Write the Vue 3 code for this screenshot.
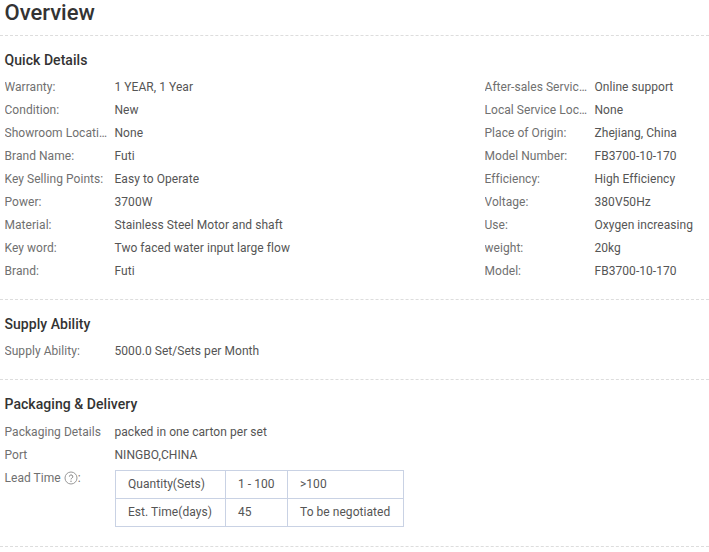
<script setup>
const left = [
  ['Warranty:', '1 YEAR, 1 Year'], ['Condition:', 'New'], ['Showroom Location:', 'None'],
  ['Brand Name:', 'Futi'], ['Key Selling Points:', 'Easy to Operate'], ['Power:', '3700W'],
  ['Material:', 'Stainless Steel Motor and shaft'], ['Key word:', 'Two faced water input large flow'], ['Brand:', 'Futi'],
]
const right = [
  ['After-sales Service Provided:', 'Online support'], ['Local Service Location:', 'None'], ['Place of Origin:', 'Zhejiang, China'],
  ['Model Number:', 'FB3700-10-170'], ['Efficiency:', 'High Efficiency'], ['Voltage:', '380V50Hz'],
  ['Use:', 'Oxygen increasing'], ['weight:', '20kg'], ['Model:', 'FB3700-10-170'],
]
</script>

<template>
  <div class="page">
    <h2 class="title">Overview</h2>

    <section class="quick">
      <h3>Quick Details</h3>
      <div class="cols">
        <div class="col left">
          <div v-for="r in left" :key="r[0]" class="row">
            <span class="label">{{ r[0] }}</span><span class="value">{{ r[1] }}</span>
          </div>
        </div>
        <div class="col">
          <div v-for="r in right" :key="r[0]" class="row">
            <span class="label">{{ r[0] }}</span><span class="value">{{ r[1] }}</span>
          </div>
        </div>
      </div>
    </section>

    <section class="supply">
      <h3>Supply Ability</h3>
      <div class="row">
        <span class="label">Supply Ability:</span><span class="value">5000.0 Set/Sets per Month</span>
      </div>
    </section>

    <section class="packaging">
      <h3>Packaging &amp; Delivery</h3>
      <div class="row">
        <span class="label">Packaging Details</span><span class="value">packed in one carton per set</span>
      </div>
      <div class="row">
        <span class="label">Port</span><span class="value">NINGBO,CHINA</span>
      </div>
      <div class="lead">
        <span class="label lead-label">Lead Time
          <svg class="help" width="14" height="14" viewBox="0 0 14 14">
            <circle cx="7" cy="7" r="6" fill="none" stroke="#999" stroke-width="1" />
            <path d="M5.4 5.6a1.7 1.7 0 1 1 2.5 1.5c-.6.3-.9.6-.9 1.3" fill="none" stroke="#888" stroke-width="1" />
            <circle cx="7" cy="10.3" r=".7" fill="#888" />
          </svg>:</span>
        <table>
          <tbody>
            <tr><td class="c1">Quantity(Sets)</td><td class="c2">1 - 100</td><td class="c3">&gt;100</td></tr>
            <tr><td class="c1">Est. Time(days)</td><td class="c2">45</td><td class="c3">To be negotiated</td></tr>
          </tbody>
        </table>
      </div>
    </section>
  </div>
</template>

<style scoped>
.page {
  width: 709px;
  height: 552px;
  overflow: hidden;
  box-sizing: border-box;
  font-family: Roboto, "Liberation Sans", sans-serif;
  font-size: 12px;
  letter-spacing: 0.05px;
  color: #555;
}
.title {
  margin: 0;
  height: 36px;
  box-sizing: border-box;
  padding-left: 4.5px;
  font-size: 22px;
  font-weight: 500;
  line-height: 25px;
  letter-spacing: 0;
  color: #333;
  border-bottom: 1px dashed #ddd;
}
section {
  box-sizing: border-box;
  padding-left: 4.5px;
  border-bottom: 1px dashed #ddd;
}
.quick { height: 264px; padding-top: 14px; }
.supply { height: 80px; padding-top: 14px; }
.packaging { height: 167px; padding-top: 14px; }
h3 {
  margin: 0 0 6px;
  font-size: 14px;
  font-weight: 500;
  line-height: 20px;
  letter-spacing: 0.05px;
  color: #333;
}
.packaging h3 { margin-bottom: 7px; }
.cols { display: flex; }
.col.left { width: 480px; }
.row {
  display: flex;
  height: 23px;
  line-height: 23px;
}
.label {
  width: 106px;
  margin-right: 4px;
  flex: none;
  color: #707070;
  white-space: nowrap;
  overflow: hidden;
  text-overflow: ellipsis;
}
.value { color: #555; white-space: nowrap; }
.lead { display: flex; margin-top: 3px; }
.lead-label { line-height: 16px; overflow: visible; margin-right: 4.5px; }
.help { vertical-align: -3px; }
table {
  border-collapse: collapse;
  width: 289px;
  table-layout: fixed;
  color: #555;
}
td {
  border: 1px solid #c9d2e4;
  height: 28px;
  padding: 0 0 1px 12px;
  box-sizing: border-box;
}
.c1 { width: 110px; }
.c2 { width: 62px; }
</style>
